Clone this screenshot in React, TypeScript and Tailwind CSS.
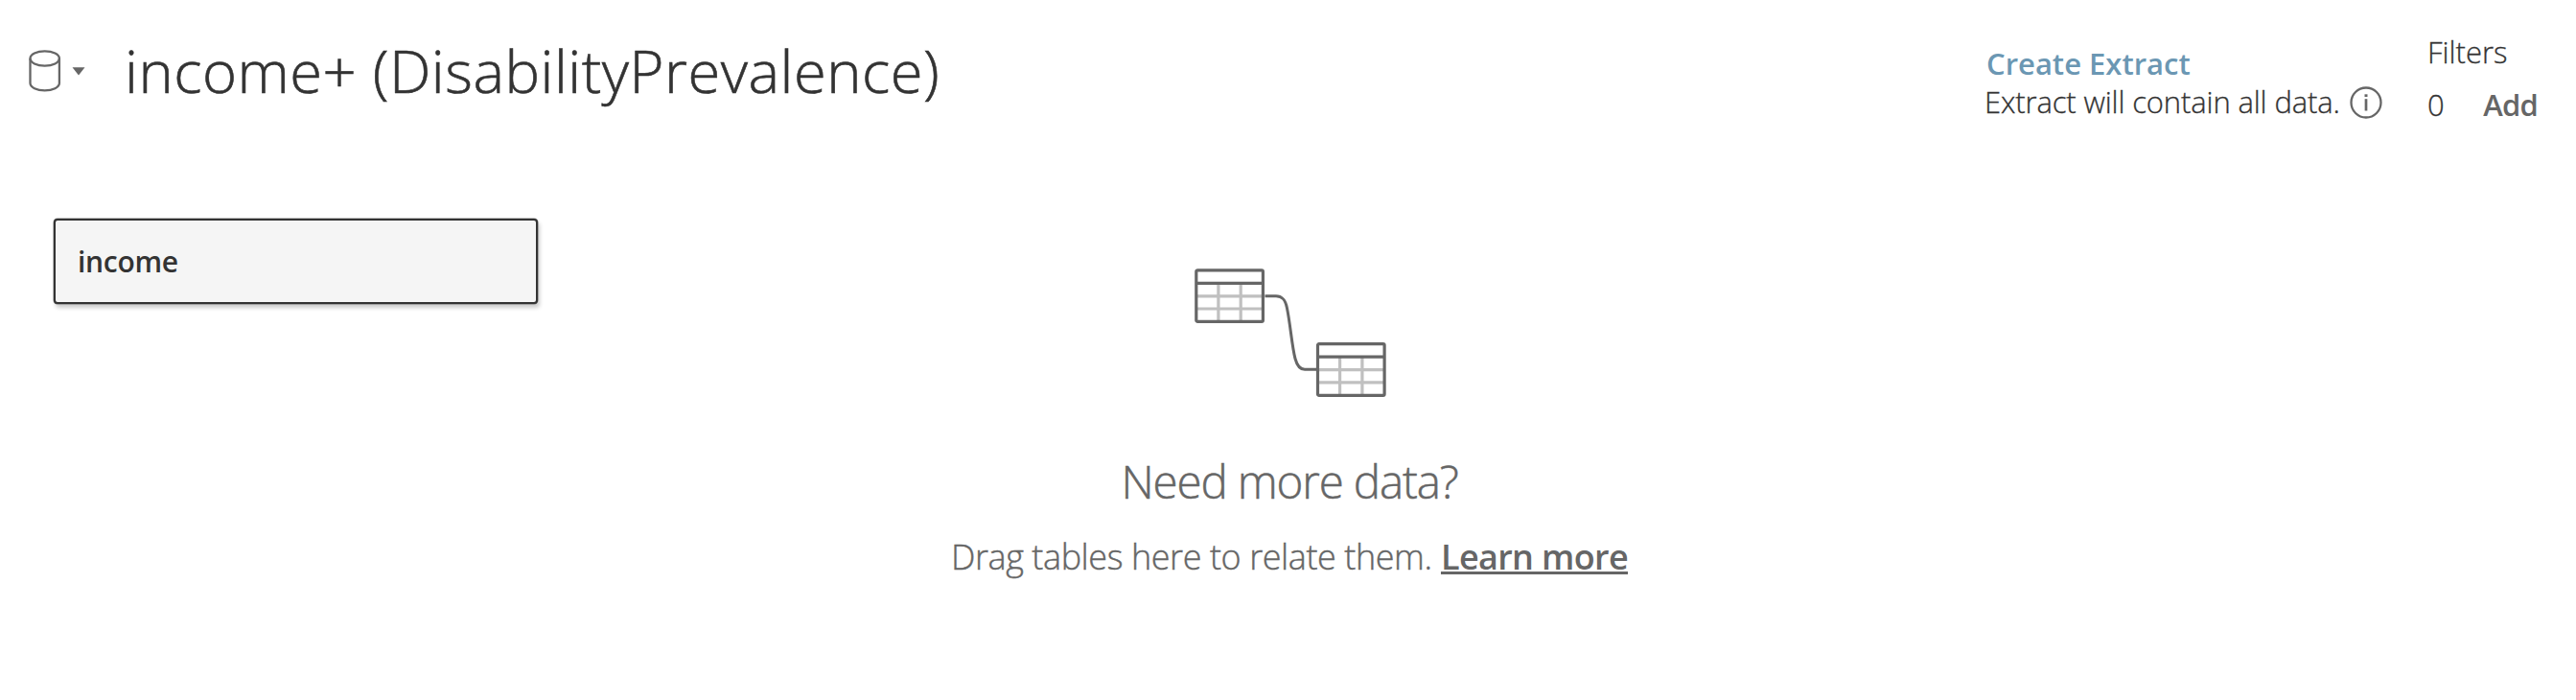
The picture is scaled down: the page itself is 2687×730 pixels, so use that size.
function DatabaseIcon() {
  return (
    <svg className="block h-[44px] w-[34px]" viewBox="0 0 34 44" fill="none" stroke="#666666" strokeWidth="2.3">
      <ellipse cx="16.7" cy="9" rx="15.2" ry="7.7" />
      <path d="M1.5 9V34.8C1.5 39.1 8.3 42.4 16.7 42.4S31.9 39.1 31.9 34.8V9" />
    </svg>
  );
}

function InfoIcon() {
  return (
    <svg className="mt-[2px] block h-[34px] w-[34px] shrink-0" viewBox="0 0 34 34" fill="none">
      <circle cx="17" cy="17" r="15.5" stroke="#666666" strokeWidth="2.3" />
      <path d="M17 13.2V25.5" stroke="#666666" strokeWidth="2.7" />
      <path d="M17 8.3V11" stroke="#666666" strokeWidth="3" />
    </svg>
  );
}

function TableGlyph({ x, y }: { x: number; y: number }) {
  return (
    <g transform={`translate(${x} ${y})`}>
      <path d="M24.7 15V56M48 15V56M1.5 28.6H71M1.5 41.8H71" stroke="#c0c0c0" strokeWidth="3.2" />
      <rect x="1.6" y="1.6" width="69.6" height="53.6" rx="1.4" stroke="#666666" strokeWidth="3.2" />
      <path d="M1.5 15.1H71" stroke="#666666" strokeWidth="3.2" />
    </g>
  );
}

function RelateIllustration() {
  return (
    <svg className="block h-[170px] w-[250px]" viewBox="0 0 250 170" fill="none">
      <path
        d="M99.5 48.7H111C118 48.7 120.8 53 122.4 61C126 78 127.5 101 131 114C133 121.5 136 125.3 141 125.3H154"
        stroke="#666666"
        strokeWidth="3"
      />
      <TableGlyph x={26.2} y={20.2} />
      <TableGlyph x={152.9} y={97.1} />
    </svg>
  );
}

export default function App() {
  return (
    <div className="flex h-[730px] w-[2687px] flex-col overflow-hidden bg-white font-['Open_Sans',sans-serif] text-[#333333]">
      <header className="flex h-[228px] items-start justify-between pr-[40px] pl-[30px]">
        <div className="flex items-start pt-[32px]">
          <button className="flex items-center pt-[20px]">
            <DatabaseIcon />
            <svg className="ml-[11px] block h-[9px] w-[14px]" viewBox="0 0 14 9">
              <path d="M0.5 0.3H13.5L7 8.5Z" fill="#666666" />
            </svg>
          </button>
          <h1 className="mt-px ml-[41px] text-[61.5px] leading-[80px] font-light tracking-[0.5px] whitespace-nowrap [-webkit-text-stroke:0.6px_#333333]">
            <span>income+ (DisabilityPrevalence)</span>
          </h1>
        </div>
        <div className="flex items-start">
          <div className="w-[462px] pt-[46px]">
            <div className="pl-[2px] text-[31px] leading-[40px] font-semibold whitespace-nowrap text-[#6b97b3]">
              <span>Create Extract</span>
            </div>
            <div className="flex items-center text-[31px] leading-[40px] font-light tracking-[-0.14px] whitespace-nowrap">
              <span className="w-[381px] [-webkit-text-stroke:0.3px_#333333]">Extract will contain all data.</span>
              <InfoIcon />
            </div>
          </div>
          <div className="w-[115px] pt-[34px] text-[31px] font-light whitespace-nowrap">
            <div className="leading-[40px] [-webkit-text-stroke:0.3px_#333333]">
              <span>Filters</span>
            </div>
            <div className="mt-[15px] flex leading-[40px]">
              <span className="w-[60px] [-webkit-text-stroke:0.3px_#333333]">0</span>
              <span className="font-semibold tracking-[-0.8px] text-[#666666]">Add</span>
            </div>
          </div>
        </div>
      </header>
      <main className="flex flex-1 items-start">
        <div className="ml-[56px] flex h-[89px] w-[505px] shrink-0 items-center rounded-[4px] border-2 border-[#333333] bg-[#f5f5f5] pl-[23px] text-[30px] leading-[40px] font-semibold tracking-[-0.3px] shadow-[0_0_0_0.5px_#777777,2px_4px_4px_rgba(0,0,0,0.2)]">
          <span>income</span>
        </div>
        <section className="ml-[359px] flex w-[850px] shrink-0 flex-col items-center pt-[32px] text-[#666666]">
          <RelateIllustration />
          <h2 className="mt-[42px] text-[47.5px] leading-[60px] font-light tracking-[-1.15px] whitespace-nowrap [-webkit-text-stroke:0.5px_#666666]">
            <span>Need more data?</span>
          </h2>
          <p className="mt-[24px] flex text-[36px] leading-[50px] font-light whitespace-nowrap">
            <span className="w-[511px] tracking-[-0.43px] [-webkit-text-stroke:0.4px_#666666]">Drag tables here to relate them.</span>
            <a className="font-semibold tracking-[-0.65px] underline decoration-[3px] underline-offset-[2px] [text-decoration-skip-ink:none]">Learn more</a>
          </p>
        </section>
      </main>
    </div>
  );
}
